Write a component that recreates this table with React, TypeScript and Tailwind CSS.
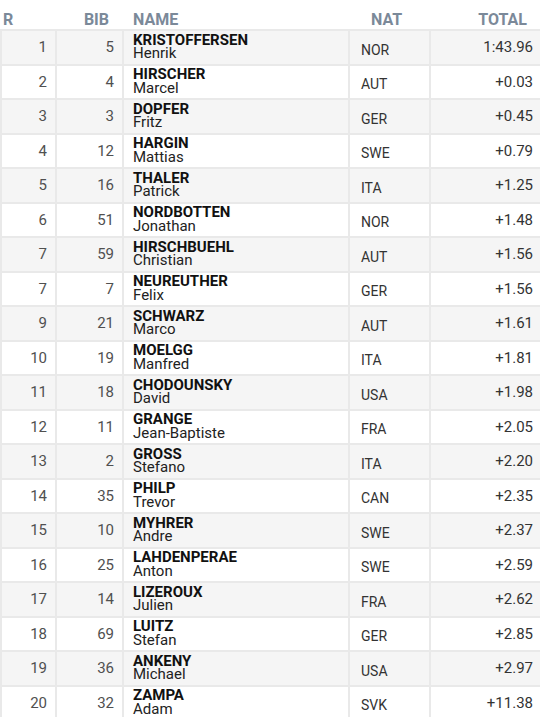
const results = [
  ["1", "5", "KRISTOFFERSEN", "Henrik", "NOR", "1:43.96"],
  ["2", "4", "HIRSCHER", "Marcel", "AUT", "+0.03"],
  ["3", "3", "DOPFER", "Fritz", "GER", "+0.45"],
  ["4", "12", "HARGIN", "Mattias", "SWE", "+0.79"],
  ["5", "16", "THALER", "Patrick", "ITA", "+1.25"],
  ["6", "51", "NORDBOTTEN", "Jonathan", "NOR", "+1.48"],
  ["7", "59", "HIRSCHBUEHL", "Christian", "AUT", "+1.56"],
  ["7", "7", "NEUREUTHER", "Felix", "GER", "+1.56"],
  ["9", "21", "SCHWARZ", "Marco", "AUT", "+1.61"],
  ["10", "19", "MOELGG", "Manfred", "ITA", "+1.81"],
  ["11", "18", "CHODOUNSKY", "David", "USA", "+1.98"],
  ["12", "11", "GRANGE", "Jean-Baptiste", "FRA", "+2.05"],
  ["13", "2", "GROSS", "Stefano", "ITA", "+2.20"],
  ["14", "35", "PHILP", "Trevor", "CAN", "+2.35"],
  ["15", "10", "MYHRER", "Andre", "SWE", "+2.37"],
  ["16", "25", "LAHDENPERAE", "Anton", "SWE", "+2.59"],
  ["17", "14", "LIZEROUX", "Julien", "FRA", "+2.62"],
  ["18", "69", "LUITZ", "Stefan", "GER", "+2.85"],
  ["19", "36", "ANKENY", "Michael", "USA", "+2.97"],
  ["20", "32", "ZAMPA", "Adam", "SVK", "+11.38"],
]

const App = () => {
  return (
    <div className="w-[540px] bg-white font-['Roboto',sans-serif]">
      <table className="w-[540px] table-fixed border-collapse">
        <colgroup>
          <col className="w-[55px]" />
          <col className="w-[67px]" />
          <col className="w-[226px]" />
          <col className="w-[81px]" />
          <col className="w-[111px]" />
        </colgroup>
        <thead>
          <tr className="h-[30px] text-[16px] leading-[18px] font-bold text-[#7b8999]">
            <th className="text-left pl-0.5 pb-0 align-bottom">R</th>
            <th className="text-right pr-[14px] align-bottom">BIB</th>
            <th className="text-left pl-[10px] align-bottom">NAME</th>
            <th className="text-left pl-[22px] align-bottom">NAT</th>
            <th className="text-right pr-[14px] align-bottom">TOTAL</th>
          </tr>
        </thead>
        <tbody>
          {results.map((r, i) => (
            <tr key={i} className={i % 2 === 0 ? "h-[34.5px] bg-[#f5f5f5]" : "h-[34.5px] bg-white"}>
              <td className="border-2 border-[#e9e9e9] text-right pr-2 text-[15px] text-[#505050]">{r[0]}</td>
              <td className="border-2 border-[#e9e9e9] text-right pr-2 text-[15px] text-[#505050]">{r[1]}</td>
              <td className="border-2 border-[#e9e9e9] pl-[9px] text-[15px] leading-[13.5px] text-[#111]">
                <div className="font-bold">{r[2]}</div>
                <div className="text-[#222]">{r[3]}</div>
              </td>
              <td className="border-2 border-[#e9e9e9] pl-[11px] pt-1.5 text-[14px] text-[#333]">{r[4]}</td>
              <td className="border-2 border-[#e9e9e9] text-right pr-[7px] text-[15px] text-[#333]">{r[5]}</td>
            </tr>
          ))}
        </tbody>
      </table>
    </div>
  )
}

export default App
